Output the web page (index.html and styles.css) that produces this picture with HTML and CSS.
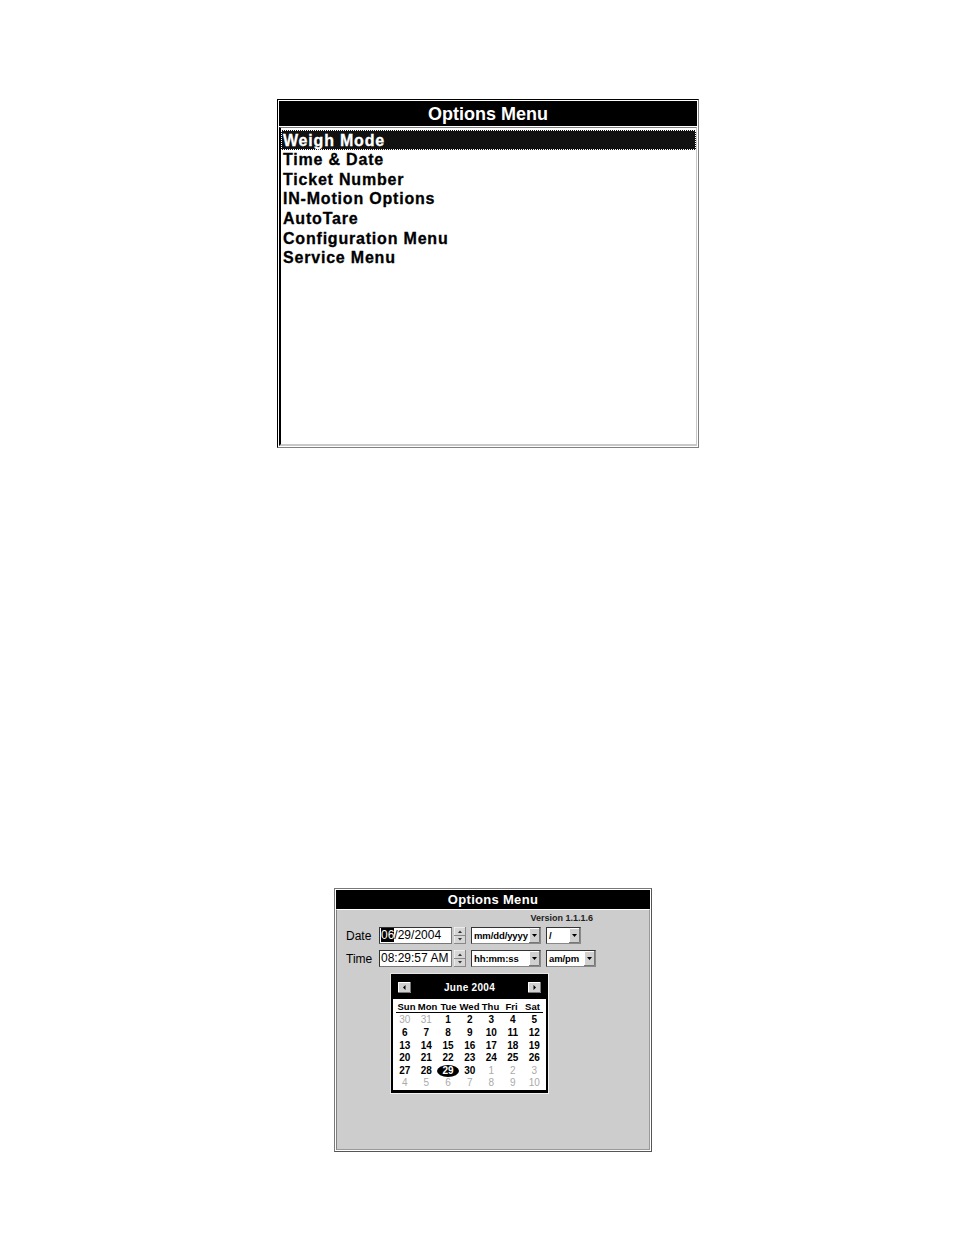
FILE: index.html
```html
<!DOCTYPE html>
<html>
<head>
<meta charset="utf-8">
<link rel="stylesheet" href="styles.css">
</head>
<body>
<div class="page">
  <div class="menu1">
    <div class="title1">Options Menu</div>
    <div class="list1">
      <div class="item sel">Weigh Mode</div>
      <div class="item">Time &amp; Date</div>
      <div class="item">Ticket Number</div>
      <div class="item">IN-Motion Options</div>
      <div class="item">AutoTare</div>
      <div class="item">Configuration Menu</div>
      <div class="item">Service Menu</div>
    </div>
  </div>

  <div class="win2">
    <div class="title2">Options Menu</div>
    <div class="body2">
      <div class="version">Version 1.1.1.6</div>
      <div class="row">
        <span class="lbl">Date</span>
        <span class="field"><span class="hl">06</span>/29/2004</span>
        <span class="spin"><svg width="12" height="17" viewBox="0 0 12 17"><rect x="0" y="0" width="12" height="17" fill="#d6d6d6"/><path d="M0 0H12M0 0V17" stroke="#fff" stroke-width="1"/><path d="M0 8.5H12" stroke="#888" stroke-width="1"/><path d="M11.5 0V17M0 16.5H12" stroke="#888" stroke-width="1"/><path d="M4 6L6 3.5L8 6Z" fill="#333"/><path d="M4 11L6 13.5L8 11Z" fill="#333"/></svg></span>
        <span class="drop w70"><span class="dtext">mm/dd/yyyy</span><span class="dbtn"><svg width="11" height="15" viewBox="0 0 11 15"><rect width="11" height="15" fill="#d0d0d0"/><path d="M0.5 15V0.5H11" stroke="#fff" fill="none"/><path d="M10.5 0V14.5H0" stroke="#777" fill="none"/><path d="M3 6H8L5.5 9Z" fill="#000"/></svg></span></span>
        <span class="drop w35"><span class="dtext">/</span><span class="dbtn"><svg width="11" height="15" viewBox="0 0 11 15"><rect width="11" height="15" fill="#d0d0d0"/><path d="M0.5 15V0.5H11" stroke="#fff" fill="none"/><path d="M10.5 0V14.5H0" stroke="#777" fill="none"/><path d="M3 6H8L5.5 9Z" fill="#000"/></svg></span></span>
      </div>
      <div class="row">
        <span class="lbl">Time</span>
        <span class="field">08:29:57 AM</span>
        <span class="spin"><svg width="12" height="17" viewBox="0 0 12 17"><rect x="0" y="0" width="12" height="17" fill="#d6d6d6"/><path d="M0 0H12M0 0V17" stroke="#fff" stroke-width="1"/><path d="M0 8.5H12" stroke="#888" stroke-width="1"/><path d="M11.5 0V17M0 16.5H12" stroke="#888" stroke-width="1"/><path d="M4 6L6 3.5L8 6Z" fill="#333"/><path d="M4 11L6 13.5L8 11Z" fill="#333"/></svg></span>
        <span class="drop w70"><span class="dtext">hh:mm:ss</span><span class="dbtn"><svg width="11" height="15" viewBox="0 0 11 15"><rect width="11" height="15" fill="#d0d0d0"/><path d="M0.5 15V0.5H11" stroke="#fff" fill="none"/><path d="M10.5 0V14.5H0" stroke="#777" fill="none"/><path d="M3 6H8L5.5 9Z" fill="#000"/></svg></span></span>
        <span class="drop w50"><span class="dtext">am/pm</span><span class="dbtn"><svg width="11" height="15" viewBox="0 0 11 15"><rect width="11" height="15" fill="#d0d0d0"/><path d="M0.5 15V0.5H11" stroke="#fff" fill="none"/><path d="M10.5 0V14.5H0" stroke="#777" fill="none"/><path d="M3 6H8L5.5 9Z" fill="#000"/></svg></span></span>
      </div>

      <div class="cal">
        <div class="cal-in">
          <div class="cal-head">
            <span class="nav"><svg width="13" height="11" viewBox="0 0 13 11"><rect width="13" height="11" fill="#d0d0d0"/><path d="M0.5 11V0.5H13" stroke="#fff" fill="none"/><path d="M12.5 0V10.5H0" stroke="#777" fill="none"/><path d="M7.5 3V8L5 5.5Z" fill="#000"/></svg></span>
            <span class="month">June 2004</span>
            <span class="nav"><svg width="13" height="11" viewBox="0 0 13 11"><rect width="13" height="11" fill="#d0d0d0"/><path d="M0.5 11V0.5H13" stroke="#fff" fill="none"/><path d="M12.5 0V10.5H0" stroke="#777" fill="none"/><path d="M5.5 3V8L8 5.5Z" fill="#000"/></svg></span>
          </div>
          <div class="cal-body">
            <div class="dnames">
              <span>Sun</span><span>Mon</span><span>Tue</span><span>Wed</span><span>Thu</span><span>Fri</span><span>Sat</span>
            </div>
            <div class="days">
              <span class="o">30</span><span class="o">31</span><span>1</span><span>2</span><span>3</span><span>4</span><span>5</span>
              <span>6</span><span>7</span><span>8</span><span>9</span><span>10</span><span>11</span><span>12</span>
              <span>13</span><span>14</span><span>15</span><span>16</span><span>17</span><span>18</span><span>19</span>
              <span>20</span><span>21</span><span>22</span><span>23</span><span>24</span><span>25</span><span>26</span>
              <span>27</span><span>28</span><span class="today"><b>29</b></span><span>30</span><span class="o">1</span><span class="o">2</span><span class="o">3</span>
              <span class="o">4</span><span class="o">5</span><span class="o">6</span><span class="o">7</span><span class="o">8</span><span class="o">9</span><span class="o">10</span>
            </div>
          </div>
        </div>
      </div>
    </div>
  </div>
</div>
</body>
</html>
```

FILE: styles.css
```css
html, body {
  margin: 0;
  padding: 0;
  background: #fff;
}
.page {
  padding-top: 99px;
  font-family: "Liberation Sans", Arial, sans-serif;
}

/* ---------- top menu ---------- */
.menu1 {
  margin-left: 277px;
  width: 422px;
  height: 349px;
  box-sizing: border-box;
  border: 1px solid;
  border-color: #000 #808080 #808080 #000;
  padding: 1px 1px 1px 1px;
  background: #fff;
  display: flex;
  flex-direction: column;
}
.title1 {
  height: 25px;
  background: #000;
  color: #fff;
  font-weight: bold;
  font-size: 18px;
  line-height: 26px;
  text-align: center;
}
.list1 {
  flex: 1;
  margin-top: 1px;
  border-top: 1px solid #808080;
  border-left: 2px solid #000;
  border-right: 1px solid #c8c8c8;
  border-bottom: 2px solid #c8c8c8;
  padding-top: 2px;
}
.item {
  height: 19.67px;
  line-height: 18.67px;
  box-sizing: border-box;
  padding-top: 1.5px;
  padding-left: 2px;
  font-weight: bold;
  font-size: 16px;
  letter-spacing: 0.8px;
  color: #000;
  white-space: nowrap;
  -webkit-text-stroke: 0.3px #000;
}
.item.sel {
  background: #111;
  color: #fff;
  -webkit-text-stroke: 0.3px #fff;
  outline: 1px dotted #fff;
  outline-offset: -1px;
}

/* ---------- bottom window ---------- */
.win2 {
  margin-top: 440px;
  margin-left: 334px;
  width: 318px;
  height: 264px;
  box-sizing: border-box;
  border: 1px solid;
  border-color: #777 #555 #555 #777;
  padding: 1px;
  background: #fff;
  display: flex;
  flex-direction: column;
}
.title2 {
  height: 19px;
  background: #000;
  color: #fff;
  font-weight: bold;
  font-size: 13px;
  letter-spacing: 0.3px;
  line-height: 20px;
  text-align: center;
}
.body2 {
  flex: 1;
  background: #cdcdcd;
  border-left: 1px solid #808080;
  border-top: 1px solid #fff;
  border-right: 1px solid #999;
  border-bottom: 1px solid #999;
  padding-top: 3px;
}
.version {
  height: 11px;
  line-height: 11px;
  font-size: 9px;
  font-weight: bold;
  color: #222;
  text-align: right;
  padding-right: 56px;
}
.row {
  display: flex;
  align-items: center;
  height: 17px;
  margin-top: 3px;
  padding-left: 9px;
}
.row + .row {
  margin-top: 6px;
}
.lbl {
  width: 33px;
  font-size: 12px;
  color: #000;
}
.field {
  width: 73px;
  height: 17px;
  box-sizing: border-box;
  border: 1px solid;
  border-color: #333 #777 #777 #333;
  background: #fff;
  font-size: 12px;
  line-height: 15px;
  padding-left: 1px;
  color: #000;
  white-space: nowrap;
}
.hl {
  background: #000;
  color: #fff;
}
.spin {
  margin-left: 2px;
  width: 12px;
  height: 17px;
  display: flex;
}
.drop {
  margin-left: 5px;
  height: 17px;
  box-sizing: border-box;
  border: 1px solid;
  border-color: #333 #888 #888 #333;
  background: #fff;
  display: flex;
  align-items: stretch;
}
.drop.w70 { width: 70px; }
.drop.w35 { width: 35px; }
.drop.w50 { width: 50px; }
.drop + .drop { margin-left: 5px; }
.dtext {
  flex: 1;
  font-size: 9.5px;
  font-weight: bold;
  letter-spacing: -0.1px;
  line-height: 15px;
  padding-left: 2px;
  color: #000;
  white-space: nowrap;
  overflow: hidden;
}
.dbtn {
  width: 11px;
  display: flex;
}

/* ---------- calendar ---------- */
.cal {
  margin-top: 6px;
  margin-left: 53px;
  width: 159px;
  height: 121px;
  box-sizing: border-box;
  border: 1px solid;
  border-color: #e6e6e6 #f2f2f2 #f2f2f2 #e6e6e6;
}
.cal-in {
  height: 100%;
  box-sizing: border-box;
  border: 2px solid #000;
  border-bottom-width: 3px;
  background: #fff;
  display: flex;
  flex-direction: column;
}
.cal-head {
  height: 25px;
  background: #000;
  display: flex;
  align-items: center;
  justify-content: space-between;
  padding: 0 5px 0 5px;
}
.nav {
  display: flex;
  width: 13px;
  height: 11px;
}
.month {
  color: #fff;
  font-weight: bold;
  font-size: 10px;
  letter-spacing: 0.3px;
}
.cal-body {
  flex: 1;
  padding: 2px 1px 0 1px;
}
.dnames {
  display: grid;
  grid-template-columns: repeat(7, 1fr);
  height: 11px;
  line-height: 11px;
  border-bottom: 1px solid #000;
  margin: 0 2px;
  font-size: 9.5px;
  font-weight: bold;
  text-align: center;
  color: #000;
}
.days {
  display: grid;
  grid-template-columns: repeat(7, 1fr);
  grid-auto-rows: 12.6px;
  margin-top: 1px;
  font-size: 10px;
  font-weight: bold;
  text-align: center;
  line-height: 12.6px;
  color: #000;
}
.days .o {
  color: #aaa;
  font-weight: normal;
}
.today {
  display: flex;
  align-items: center;
  justify-content: center;
}
.today b {
  display: block;
  width: 22px;
  height: 12px;
  line-height: 12px;
  border-radius: 50%;
  background: #000;
  color: #fff;
}
```
